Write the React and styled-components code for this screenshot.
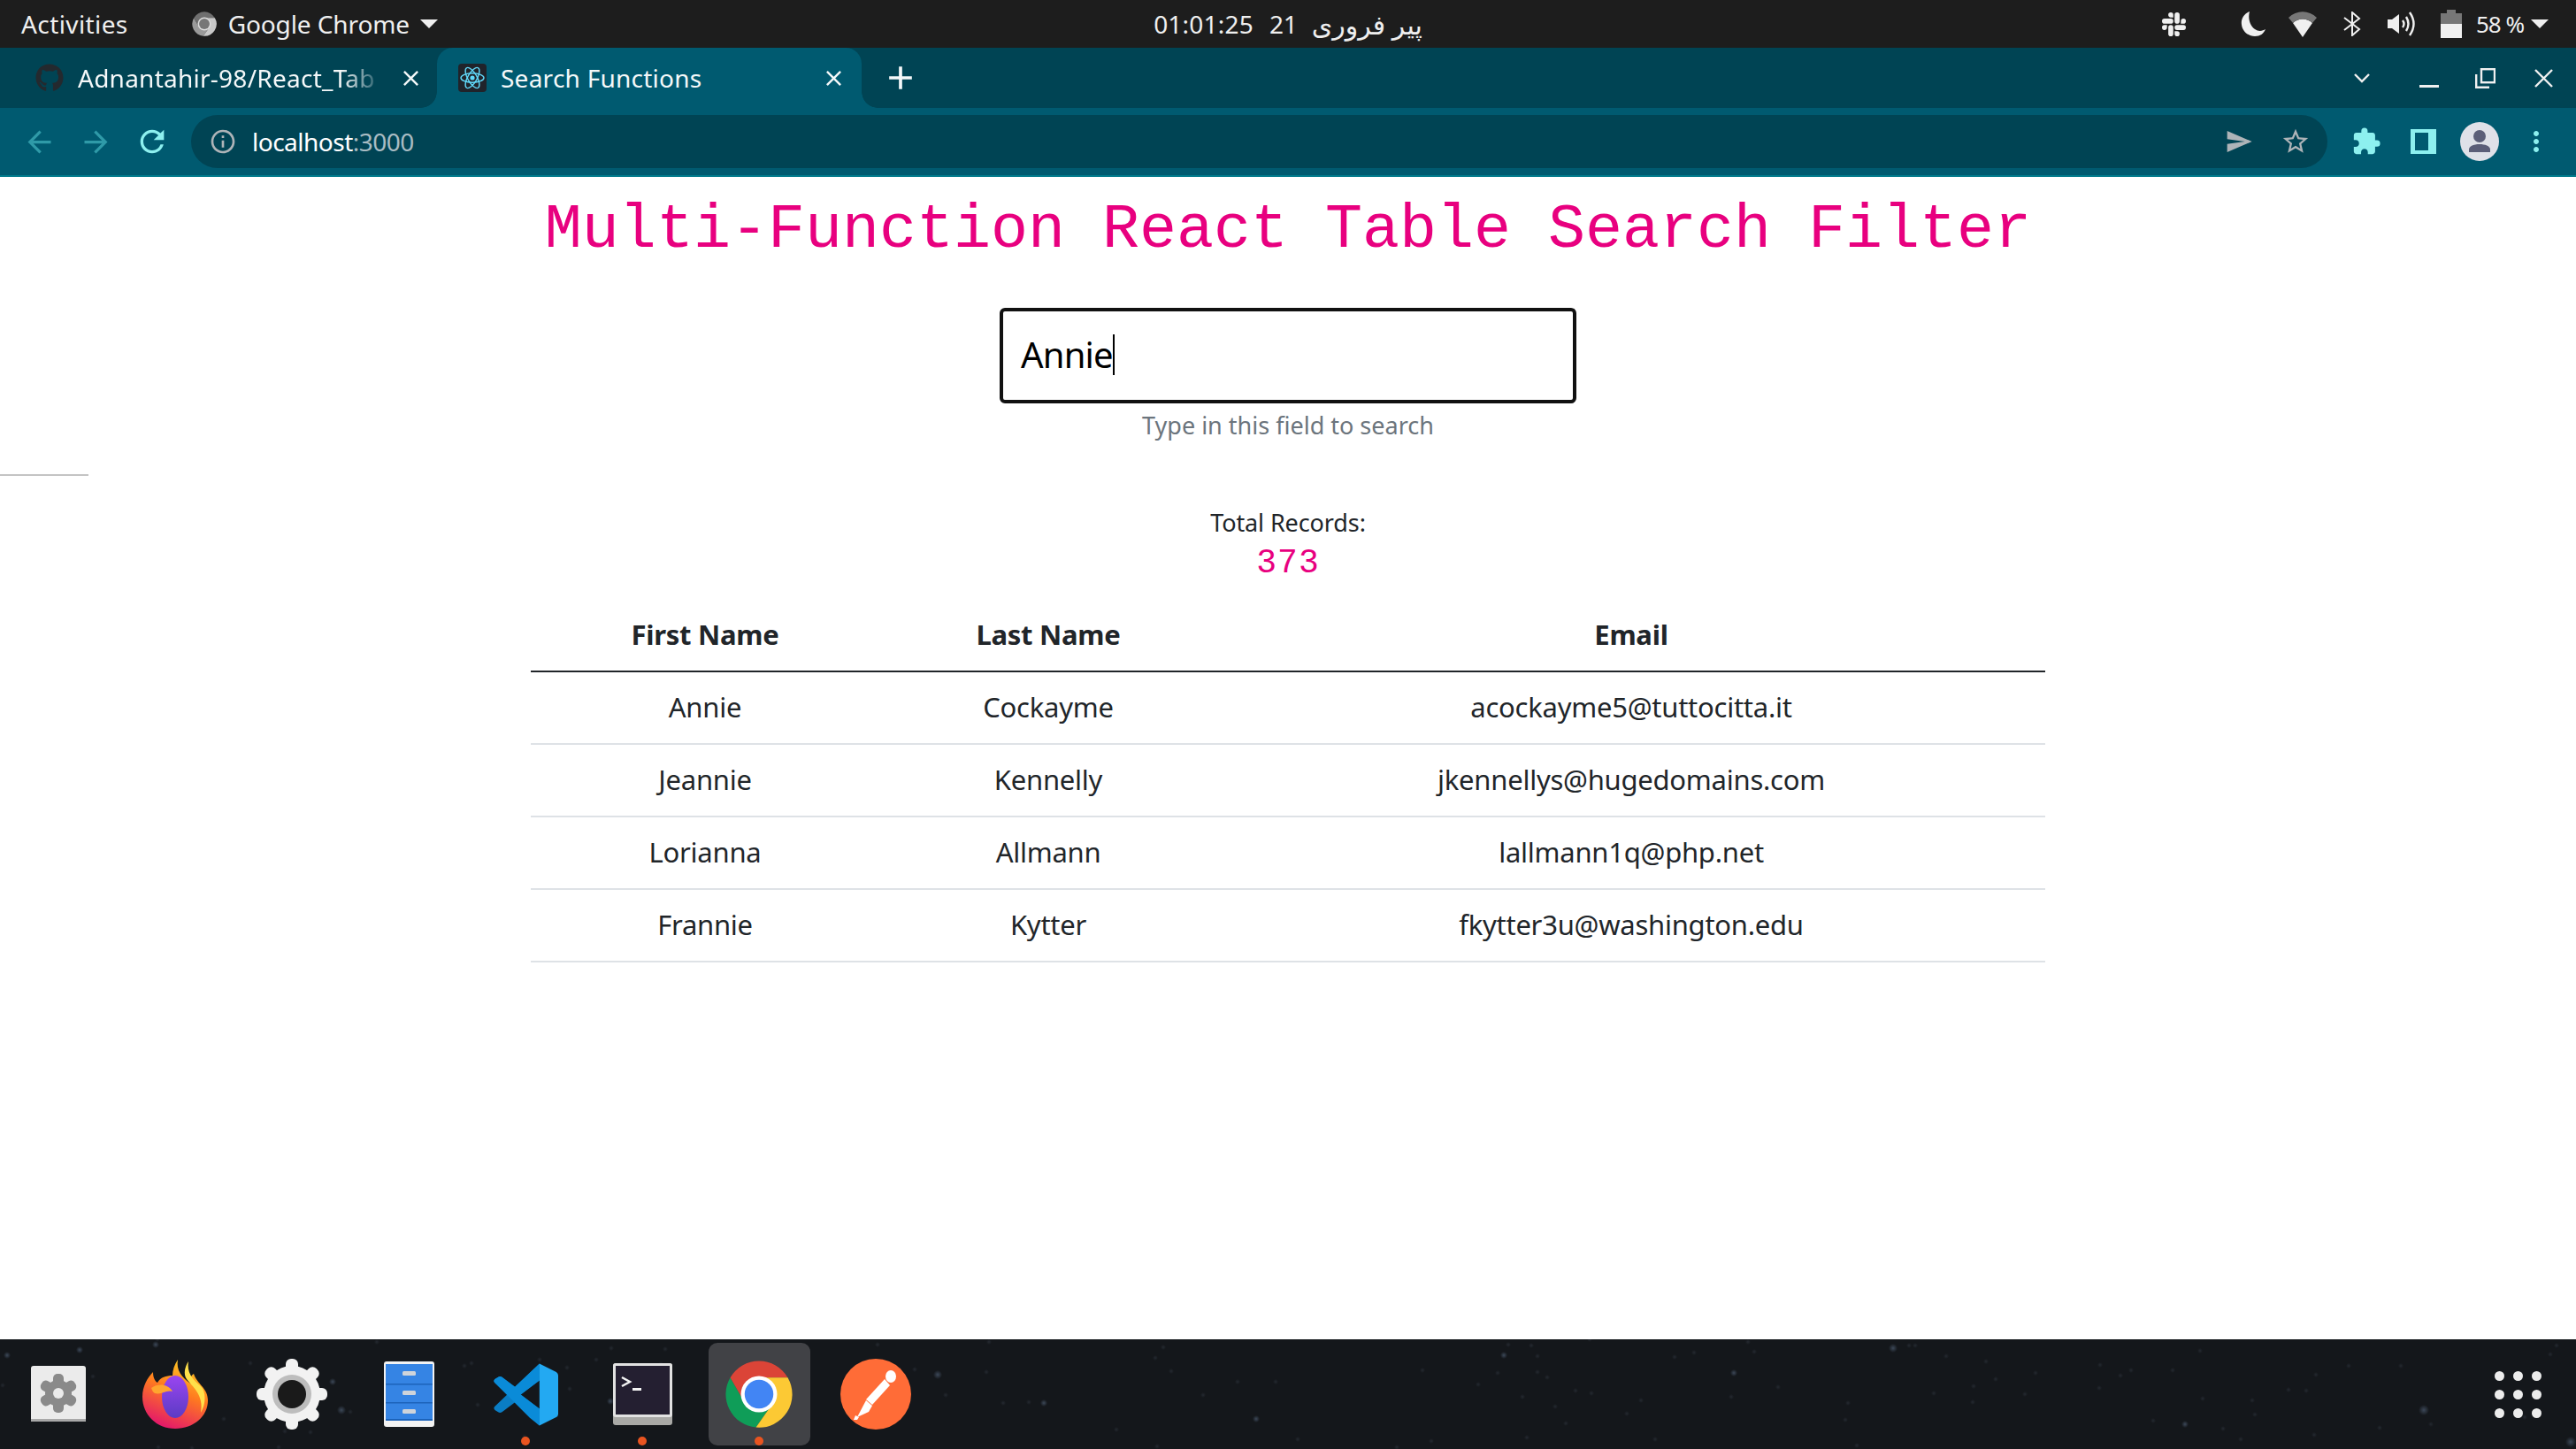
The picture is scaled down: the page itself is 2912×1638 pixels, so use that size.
import React from "react"
import styled, { createGlobalStyle } from "styled-components"
import { FaGithub } from "react-icons/fa"
import { SiSlack } from "react-icons/si"
import {
  MdArrowBack,
  MdArrowForward,
  MdRefresh,
  MdInfoOutline,
  MdSend,
  MdStarBorder,
  MdExtension,
  MdMoreVert,
  MdClose,
  MdAdd,
} from "react-icons/md"

const UI_FONT = `"Noto Sans","DejaVu Sans",sans-serif`

const GlobalStyle = createGlobalStyle`
  html,body{margin:0;padding:0;background:#fff;}
  body{font-family:${UI_FONT};overflow:hidden;}
  *{box-sizing:border-box;}
`

const Screen = styled.div`
  width:2912px;
  height:1638px;
  display:flex;
  flex-direction:column;
  overflow:hidden;
`

/* ---- gnome top bar ---- */
const TopBar = styled.div`
  height:54px;
  flex:none;
  background:#1d1d1d;
  color:#efefef;
  display:grid;
  grid-template-columns:1fr auto 1fr;
  align-items:center;
  font-size:28px;
  letter-spacing:-0.1px;
`
const TopLeft = styled.div`
  display:flex;
  align-items:center;
  padding-left:24px;
`
const Activities = styled.span`
  letter-spacing:0.4px;
`
const AppMenu = styled.div`
  display:flex;
  align-items:center;
  margin-left:71px;
  gap:12px;
`
const Clock = styled.div`
  display:flex;
  align-items:center;
  gap:18px;
`
const ClockTime = styled.span`
  letter-spacing:0.2px;
`
const Persian = styled.bdi`
  font-size:30px;
  margin-left:-2px;
`
const Tray = styled.div`
  display:flex;
  align-items:center;
  justify-content:flex-end;
  padding-right:31px;
`
const TrayItem = styled.div`
  display:flex;
  align-items:center;
  margin-left:${p => p.$gap}px;
`
const BatteryText = styled.div`
  width:51px;
  margin-left:16px;
  font-size:26px;
  letter-spacing:-1px;
  white-space:nowrap;
`
const Caret = styled.div`
  width:0;
  height:0;
  border-left:10px solid transparent;
  border-right:10px solid transparent;
  border-top:10px solid #efefef;
`

/* ---- chrome tabs ---- */
const TabStrip = styled.div`
  height:68px;
  flex:none;
  background:#004454;
  display:flex;
  align-items:stretch;
  color:#f4f8f9;
  font-size:28px;
  letter-spacing:0.25px;
`
const Tab = styled.div`
  position:relative;
  width:${p => p.$width}px;
  display:flex;
  align-items:center;
  gap:16px;
  padding-left:${p => p.$pad}px;
  padding-right:${p => p.$active ? 17 : 15}px;
  background:${p => p.$active ? "#005a70" : "transparent"};
  border-radius:18px 18px 0 0;
  &::before,&::after{
    content:"";
    display:${p => p.$active ? "block" : "none"};
    position:absolute;
    bottom:0;
    width:18px;
    height:18px;
  }
  &::before{left:-18px;background:radial-gradient(circle at 0 0,transparent 17.5px,#005a70 18px);}
  &::after{right:-18px;background:radial-gradient(circle at 100% 0,transparent 17.5px,#005a70 18px);}
`
const TabTitle = styled.span`
  flex:1;
  white-space:nowrap;
  ${p => p.$fade && `-webkit-mask-image:linear-gradient(90deg,#000 86%,transparent 100%);`}
`
const Favicon = styled.div`
  width:32px;
  height:32px;
  flex:none;
  display:flex;
  align-items:center;
  justify-content:center;
  color:#24292e;
`
const NewTab = styled.div`
  margin-left:22px;
  display:flex;
  align-items:center;
`
const WindowControls = styled.div`
  margin-left:auto;
  display:flex;
  align-items:center;
  padding-right:26px;
`
const WindowButton = styled.div`
  display:flex;
  align-items:center;
  margin-left:${p => p.$gap}px;
`

/* ---- chrome toolbar ---- */
const Toolbar = styled.div`
  height:78px;
  flex:none;
  background:#005a70;
  border-bottom:2px solid #007a8c;
  display:flex;
  align-items:center;
  padding:0 13px 0 12px;
`
const ToolButton = styled.div`
  width:64px;
  height:64px;
  flex:none;
  display:flex;
  align-items:center;
  justify-content:center;
  color:${p => p.$dim ? "#2f9aa8" : "#8df0ef"};
`
const Omnibox = styled.div`
  flex:1;
  height:60px;
  margin:0 12px;
  border-radius:30px;
  background:#004454;
  display:flex;
  align-items:center;
  padding:0 19px 0 20px;
  color:#aeb4b8;
`
const Url = styled.div`
  margin-left:17px;
  font-size:28px;
  letter-spacing:-0.5px;
  color:#fff;
  span{color:#a9bcc3;}
`
const OmniActions = styled.div`
  margin-left:auto;
  display:flex;
  align-items:center;
  gap:31px;
`

/* ---- page ---- */
const Main = styled.main`
  flex:1;
  background:#fff;
  display:flex;
  flex-direction:column;
  align-items:center;
  overflow:hidden;
`
const Title = styled.h1`
  margin:0;
  height:116px;
  line-height:121px;
  font-family:"Liberation Mono",monospace;
  font-size:70px;
  font-weight:400;
  color:#e8007f;
  white-space:pre;
`
const SearchBox = styled.div`
  width:652px;
  height:108px;
  margin-top:32px;
  border:4px solid #111;
  border-radius:6px;
  padding:0 0 3px 20px;
  display:flex;
  align-items:center;
  font-size:40px;
  letter-spacing:-0.8px;
  color:#000;
`
const TextCaret = styled.span`
  width:2px;
  height:46px;
  margin-left:0;
  background:#000;
`
const Hint = styled.div`
  margin-top:6px;
  height:40px;
  line-height:38px;
  font-size:27px;
  color:#6c757d;
`
const Rule = styled.hr`
  align-self:flex-start;
  width:100px;
  height:2px;
  margin:34px 0 0;
  border:0;
  background:#c4c4c4;
`
const TotalLabel = styled.div`
  margin-top:33px;
  height:40px;
  line-height:39px;
  font-size:27px;
  letter-spacing:-0.1px;
  color:#212529;
`
const TotalCount = styled.div`
  margin-top:4px;
  height:44px;
  line-height:44px;
  font-family:"Liberation Mono",monospace;
  font-size:38px;
  letter-spacing:1px;
  color:#e8007f;
`
const Table = styled.table`
  width:1712px;
  margin-top:17px;
  table-layout:fixed;
  border-collapse:separate;
  border-spacing:0;
  color:#212529;
  font-size:31px;
  letter-spacing:-0.25px;
`
const Head = styled.th`
  height:84px;
  padding:0;
  text-align:center;
  vertical-align:middle;
  font-weight:700;
  border-bottom:2px solid #212529;
`
const Cell = styled.td`
  height:82px;
  padding:0 0 2px;
  text-align:center;
  vertical-align:middle;
  border-bottom:2px solid #dee2e6;
`

/* ---- dock ---- */
const STARS = [
  [8,18,2],[90,12,2],[176,6,2],[376,48,2],[386,80,3],[690,70,2],[1000,60,2],[1060,40,3],
  [1180,72,2],[1420,90,2],[1700,18,2],[1960,38,2],[2140,10,3],[2470,96,2],[2740,80,4],[2906,116,4],
]
// faint dust, same layout on every render
let seed = 7
const nextRandom = max => {
  seed = (seed * 1103515245 + 12345) % 2147483648
  return Math.floor((seed / 2147483648) * max)
}
const dust = Array.from({ length: 120 }, () => [nextRandom(2912), nextRandom(124)])
const starfield = [
  ...STARS.map(([x, y, r]) => `radial-gradient(circle ${r + 2}px at ${x}px ${y}px,rgba(120,145,180,.4),transparent)`),
  ...dust.map(([x, y]) => `radial-gradient(circle 3px at ${x}px ${y}px,rgba(120,135,160,.16),transparent)`),
].join(",")

const Dock = styled.div`
  height:124px;
  flex:none;
  background-color:#14171b;
  background-image:${starfield};
  display:flex;
  align-items:center;
`
const DockSlot = styled.div`
  position:relative;
  width:132px;
  height:124px;
  flex:none;
  display:flex;
  align-items:center;
  justify-content:center;
  &::before{
    content:"";
    display:${p => p.$current ? "block" : "none"};
    position:absolute;
    top:4px;
    bottom:4px;
    left:9px;
    right:8px;
    border-radius:10px;
    background:#414246;
  }
  svg{position:relative;}
`
const RunningDot = styled.span`
  position:absolute;
  left:61px;
  bottom:4px;
  width:10px;
  height:10px;
  border-radius:50%;
  background:#e95420;
`
const AppGrid = styled.div`
  margin-left:auto;
  margin-right:39px;
  display:grid;
  grid-template-columns:repeat(3,11px);
  gap:10px;
`
const GridDot = styled.span`
  width:11px;
  height:11px;
  border-radius:50%;
  background:#ececec;
`

/* ---- drawn icons ---- */
const ChromeLogo = ({ size, mono }) => (
  <svg width={size} height={size} viewBox="0 0 48 48">
    <path d="M5 13 14.500 29.500A11 11 0 0 0 33.500 29.500L22 46A22 22 0 0 1 5 13Z" fill={mono ? "#9a9a9a" : "#0f9d58"} />
    <path d="M5 13A22 22 0 0 1 43 13H24A11 11 0 0 0 14.500 29.500Z" fill={mono ? "#6f6f6f" : "#db4437"} />
    <path d="M43 13A22 22 0 0 1 22 46L33.500 29.500A11 11 0 0 0 24 13Z" fill={mono ? "#c9c9c9" : "#fcc934"} />
    <circle cx="24" cy="24" r="12" fill={mono ? "#dddddd" : "#fff"} />
    <circle cx="24" cy="24" r="9.500" fill={mono ? "#777" : "#4285f4"} />
  </svg>
)

const ReactIcon = () => (
  <svg width="32" height="32" viewBox="0 0 32 32">
    <rect width="32" height="32" rx="4" fill="#20232a" />
    <g fill="none" stroke="#61dafb" strokeWidth="1.400">
      <ellipse cx="16" cy="16" rx="13" ry="5.200" />
      <ellipse cx="16" cy="16" rx="13" ry="5.200" transform="rotate(60 16 16)" />
      <ellipse cx="16" cy="16" rx="13" ry="5.200" transform="rotate(120 16 16)" />
    </g>
    <circle cx="16" cy="16" r="2.600" fill="#61dafb" />
  </svg>
)

const Moon = () => (
  <svg width="28" height="28" viewBox="0 0 28 28">
    <path d="M10 0C3 3 0 9 1 15c1 8 8 13 15 13 6 0 10-3 12-8-3 2-8 3-12 0C10 16 8 7 10 0Z" fill="#f0f0f0" />
  </svg>
)
const Wifi = () => (
  <svg width="32" height="29" viewBox="0 0 32 29">
    <path d="M5 13C11 7 21 7 27 13L16 29Z" fill="#f0f0f0" />
    <path d="M0 7C9-2 23-2 32 7L27 13C21 7 11 7 5 13Z" fill="#777" />
  </svg>
)
const Bluetooth = () => (
  <svg width="20" height="28" viewBox="0 0 20 28" fill="none" stroke="#f0f0f0" strokeWidth="2">
    <path d="M1 7 18 20 10 27V1L18 8 1 21" />
  </svg>
)
const Volume = () => (
  <svg width="32" height="28" viewBox="0 0 32 28">
    <path d="M0 9H5L13 3V25L5 19H0Z" fill="#f0f0f0" />
    <g fill="none" stroke="#f0f0f0" strokeWidth="2.400">
      <path d="M17 10Q20 14 17 18" />
      <path d="M21 6Q26 14 21 22" />
      <path d="M25 1Q34 14 25 27" />
    </g>
  </svg>
)
const Battery = () => (
  <svg width="24" height="32" viewBox="0 0 24 32">
    <path d="M7 0H17V4H24V16H0V4H7Z" fill="#777" />
    <rect y="16" width="24" height="16" fill="#f0f0f0" />
  </svg>
)
const Chevron = () => (
  <svg width="18" height="11" viewBox="0 0 18 11" fill="none" stroke="#f0f0f0" strokeWidth="2.400">
    <path d="M1 1 9 9 17 1" />
  </svg>
)
const Minimize = () => (
  <svg width="22" height="24" viewBox="0 0 22 24">
    <rect y="20" width="22" height="3" fill="#f0f0f0" />
  </svg>
)
const Restore = () => (
  <svg width="23" height="23" viewBox="0 0 23 23" fill="none" stroke="#f0f0f0" strokeWidth="2.400">
    <rect x="7" y="1.200" width="15" height="15" />
    <path d="M1.200 7V21.800H16" />
  </svg>
)
const WindowClose = () => (
  <svg width="21" height="21" viewBox="0 0 21 21" fill="none" stroke="#f0f0f0" strokeWidth="2.400">
    <path d="M1 1 20 20M20 1 1 20" />
  </svg>
)
const SidePanel = () => (
  <svg width="29" height="28" viewBox="0 0 29 28">
    <rect width="29" height="28" fill="#8df0ef" />
    <rect x="5" y="4" width="15" height="20" fill="#005a70" />
  </svg>
)
const Avatar = () => (
  <svg width="44" height="44" viewBox="0 0 44 44">
    <circle cx="22" cy="22" r="22" fill="#dfe1e8" />
    <circle cx="22" cy="16" r="7" fill="#5b5e78" />
    <path d="M10 34V31C10 27 16 25 22 25S34 27 34 31V34Z" fill="#5b5e78" />
  </svg>
)

const SettingsTile = () => (
  <svg width="62" height="64" viewBox="0 0 62 64">
    <rect width="62" height="63" rx="3" fill="#ebebeb" />
    <rect y="60" width="62" height="3" fill="#a8a8a8" />
    <g fill="#8a8a8a">
      {[0, 60, 120].map(a => (
        <rect key={a} x="25" y="9" width="12" height="44" rx="5" transform={`rotate(${a} 31 31)`} />
      ))}
      <circle cx="31" cy="31" r="15" />
    </g>
    <circle cx="31" cy="31" r="6" fill="#ebebeb" />
  </svg>
)

const Firefox = () => (
  <svg width="74" height="78" viewBox="0 0 74 78">
    <defs>
      <linearGradient id="ffBody" x1="0.700" y1="0" x2="0.300" y2="1">
        <stop offset="0" stopColor="#ffd024" />
        <stop offset="0.450" stopColor="#ff7a1f" />
        <stop offset="1" stopColor="#e2136e" />
      </linearGradient>
      <linearGradient id="ffCore" x1="0.500" y1="0" x2="0.500" y2="1">
        <stop offset="0" stopColor="#9a45f0" />
        <stop offset="1" stopColor="#5b3bc4" />
      </linearGradient>
    </defs>
    <path d="M40 0C38 12 44 20 56 28 53 24 54 18 58 16 62 28 74 32 74 46 74 64 58 78 37 78 16 78 0 62 0 42 0 30 6 20 12 14 12 20 14 24 17 26 20 20 27 18 34 18 34 12 36 6 40 0Z" fill="url(#ffBody)" />
    <path d="M52 2C50 14 56 22 66 30 72 36 72 50 66 60 70 40 56 30 50 22 46 16 48 8 52 2Z" fill="#ffe04a" />
    <ellipse cx="37" cy="42" rx="15" ry="24" fill="url(#ffCore)" />
    <path d="M10 32C18 26 30 28 34 36 26 34 22 40 14 38 12 37 11 35 10 32Z" fill="#ffa52e" />
  </svg>
)

const SystemGear = () => (
  <svg width="80" height="80" viewBox="0 0 80 80">
    <g fill="#f2f2f2">
      {[0, 45, 90, 135].map(a => (
        <rect key={a} x="33" y="0" width="14" height="80" rx="6" transform={`rotate(${a} 40 40)`} />
      ))}
      <circle cx="40" cy="40" r="32" />
    </g>
    <circle cx="40" cy="40" r="22" fill="#bdbdbd" />
    <circle cx="40" cy="40" r="16" fill="#1a1a1a" />
  </svg>
)

const FileCabinet = () => (
  <svg width="57" height="74" viewBox="0 0 57 74">
    <rect width="57" height="74" rx="3" fill="#f2f2f2" />
    <rect x="2" y="3" width="53" height="64" fill="#3584e4" />
    <rect x="2" y="25" width="53" height="1.500" fill="#1c63ba" />
    <rect x="2" y="46" width="53" height="1.500" fill="#1c63ba" />
    <rect x="2" y="65" width="53" height="2" fill="#1c63ba" />
    {[11, 33, 54].map(y => (
      <rect key={y} x="21" y={y} width="15" height="5" rx="1.500" fill="#cfd4da" />
    ))}
  </svg>
)

const VsCode = () => (
  <svg width="73" height="75" viewBox="0 0 100 100">
    <path d="M71 2 33 38 13 23Q10 21 7 23L2 26Q-1 29 2 32L21 50 2 68Q-1 71 2 74L7 77Q10 79 13 77L33 62 71 98V72L42 50 71 28Z" fill="#0a7dc4" />
    <path d="M71 2 33 38 13 23Q10 21 7 23L2 26Q-1 29 2 32L56 86 71 98V72L42 50 71 28Z" fill="#0a8bd8" />
    <path d="M71 2 97 15Q100 17 100 20V80Q100 83 97 85L71 98Z" fill="#23a9f2" />
  </svg>
)

const Terminal = () => (
  <svg width="67" height="70" viewBox="0 0 67 70">
    <rect width="67" height="70" rx="3" fill="#a9a9a6" />
    <rect width="67" height="61" rx="3" fill="#e2e2e2" />
    <rect x="3" y="3" width="61" height="55" fill="#241f31" />
    <path d="M10 16 19 21 10 26" fill="none" stroke="#f4f4f4" strokeWidth="2.500" />
    <rect x="22" y="28" width="10" height="3" fill="#f4f4f4" />
  </svg>
)

const Postman = () => (
  <svg width="80" height="80" viewBox="0 0 80 80">
    <circle cx="40" cy="40" r="40" fill="#ff6c37" />
    <g fill="#fff">
      <ellipse cx="57" cy="20" rx="6" ry="7" />
      <path d="M50 23 56 30 36 52 29 46Z" />
      <path d="M29 47 36 53 32 60 19 66Z" />
      <path d="M17 64 21 66 19 69 15 69Z" />
    </g>
  </svg>
)

const rows = [
  ["Annie", "Cockayme", "acockayme5@tuttocitta.it"],
  ["Jeannie", "Kennelly", "jkennellys@hugedomains.com"],
  ["Lorianna", "Allmann", "lallmann1q@php.net"],
  ["Frannie", "Kytter", "fkytter3u@washington.edu"],
]

export default function App() {
  return (
    <Screen>
      <GlobalStyle />
      <TopBar>
        <TopLeft>
          <Activities>Activities</Activities>
          <AppMenu>
            <ChromeLogo size={30} mono />
            <span>Google Chrome</span>
            <Caret />
          </AppMenu>
        </TopLeft>
        <Clock>
          <ClockTime>01:01:25</ClockTime>
          <span>21</span>
          <Persian dir="rtl">پیر فروری</Persian>
        </Clock>
        <Tray>
          <TrayItem $gap={0}><SiSlack size={27} color="#f0f0f0" /></TrayItem>
          <TrayItem $gap={62}><Moon /></TrayItem>
          <TrayItem $gap={26}><Wifi /></TrayItem>
          <TrayItem $gap={30}><Bluetooth /></TrayItem>
          <TrayItem $gap={30}><Volume /></TrayItem>
          <TrayItem $gap={28}><Battery /></TrayItem>
          <BatteryText>58 %</BatteryText>
          <TrayItem $gap={11}><Caret /></TrayItem>
        </Tray>
      </TopBar>

      <TabStrip>
        <Tab $width={494} $pad={40}>
          <Favicon><FaGithub size={32} /></Favicon>
          <TabTitle $fade>Adnantahir-98/React_Tab</TabTitle>
          <MdClose size={29} />
        </Tab>
        <Tab $active $width={480} $pad={24}>
          <Favicon><ReactIcon /></Favicon>
          <TabTitle>Search Functions</TabTitle>
          <MdClose size={29} />
        </Tab>
        <NewTab><MdAdd size={44} /></NewTab>
        <WindowControls>
          <WindowButton $gap={0}><Chevron /></WindowButton>
          <WindowButton $gap={56}><Minimize /></WindowButton>
          <WindowButton $gap={41}><Restore /></WindowButton>
          <WindowButton $gap={44}><WindowClose /></WindowButton>
        </WindowControls>
      </TabStrip>

      <Toolbar>
        <ToolButton $dim><MdArrowBack size={39} /></ToolButton>
        <ToolButton $dim><MdArrowForward size={39} /></ToolButton>
        <ToolButton><MdRefresh size={40} /></ToolButton>
        <Omnibox>
          <MdInfoOutline size={32} />
          <Url>localhost<span>:3000</span></Url>
          <OmniActions>
            <MdSend size={32} />
            <MdStarBorder size={34} />
          </OmniActions>
        </Omnibox>
        <ToolButton><MdExtension size={34} /></ToolButton>
        <ToolButton><SidePanel /></ToolButton>
        <ToolButton><Avatar /></ToolButton>
        <ToolButton><MdMoreVert size={36} /></ToolButton>
      </Toolbar>

      <Main>
        <Title>Multi-Function React Table Search Filter</Title>
        <SearchBox>Annie<TextCaret /></SearchBox>
        <Hint>Type in this field to search</Hint>
        <Rule />
        <TotalLabel>Total Records:</TotalLabel>
        <TotalCount>373</TotalCount>
        <Table>
          <colgroup>
            <col width="394" />
            <col width="382" />
            <col width="936" />
          </colgroup>
          <thead>
            <tr>
              <Head>First Name</Head>
              <Head>Last Name</Head>
              <Head>Email</Head>
            </tr>
          </thead>
          <tbody>
            {rows.map(row => (
              <tr key={row[2]}>
                {row.map(value => <Cell key={value}>{value}</Cell>)}
              </tr>
            ))}
          </tbody>
        </Table>
      </Main>

      <Dock>
        <DockSlot><SettingsTile /></DockSlot>
        <DockSlot><Firefox /></DockSlot>
        <DockSlot><SystemGear /></DockSlot>
        <DockSlot><FileCabinet /></DockSlot>
        <DockSlot><VsCode /><RunningDot /></DockSlot>
        <DockSlot><Terminal /><RunningDot /></DockSlot>
        <DockSlot $current><ChromeLogo size={82} /><RunningDot /></DockSlot>
        <DockSlot><Postman /></DockSlot>
        <AppGrid>
          {Array.from({ length: 9 }, (_, i) => <GridDot key={i} />)}
        </AppGrid>
      </Dock>
    </Screen>
  )
}
